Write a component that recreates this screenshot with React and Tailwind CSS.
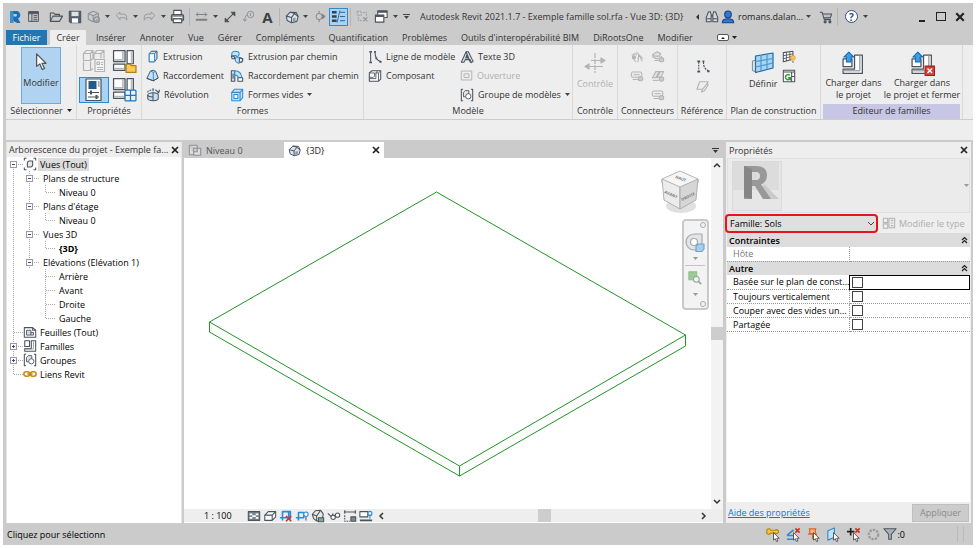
import React from "react";

const INK = "#4b535d";
const BLUE = "#2f8bd0";
const PALE = "#c4e3f8";
const DIM = "#b4b4b4";

function Icon({ size = 16, box = "0 0 16 16", color = INK, children }) {
  return (
    <svg width={size} height={size} viewBox={box} fill="none" stroke={color} strokeWidth="1.2" strokeLinejoin="round" className="block shrink-0" aria-hidden="true">
      {children}
    </svg>
  );
}

function Caret({ color = "#444" }) {
  return (
    <svg width="5" height="3" viewBox="0 0 5 3" className="block shrink-0" aria-hidden="true">
      <path d="M0 0h5L2.5 3z" fill={color} />
    </svg>
  );
}

function Cross({ size = 8, color = "#222", width = 1.7 }) {
  return (
    <svg width={size} height={size} viewBox="0 0 8 8" className="block shrink-0" aria-hidden="true">
      <path d="M1 1l6 6M7 1l-6 6" stroke={color} strokeWidth={width} />
    </svg>
  );
}

/* ---------- quick access icons ---------- */

const RevitLogo = () => (
  <Icon>
    <path d="M3 2h6.500a4 4 0 0 1 1.500 7.600L13.500 14h-3.600L7.500 10H6.300v4H3zM6.300 5v2.400h2.500a1.200 1.200 0 0 0 0-2.400z" fill="#1c6fb5" stroke="none" fillRule="evenodd" />
    <path d="M3 2h3.300v12H3z" fill="#3592d8" stroke="none" />
    <path d="M6.300 10h1.200l2.400 4-3-2z" fill="#0d4f8b" stroke="none" />
  </Icon>
);
const HomePanel = () => (
  <Icon size={13}>
    <rect x="2" y="2" width="12" height="12" />
    <path d="M2 4.500h12M6 4.500V14M8 7h4.500M8 9.500h4.500M8 12h4.500" />
    <path d="M2 3h12" strokeWidth="2" />
  </Icon>
);
const OpenFolder = () => (
  <Icon size={14}>
    <path d="M1.500 13V3.500h4l1.500 1.500h5V7M1.500 13l3-6h11l-3.500 6z" />
  </Icon>
);
const Save = () => (
  <Icon size={14}>
    <path d="M1.500 1.500h13v13H3l-1.500-1.500z" fill="#56616d" />
    <rect x="4" y="2" width="8" height="5" fill="#dfe3e6" stroke="none" />
    <rect x="4.500" y="9.500" width="7" height="5" fill="#fff" stroke="none" />
  </Icon>
);
const Sync = () => (
  <Icon size={14} color="#8d9298">
    <path d="M7 1.500l6 2.500v6l-6 3.500-5.500-3V4z" fill="#c9cccf" />
    <path d="M1.500 4L7 6.500 13 4M7 6.500v7" />
    <circle cx="11" cy="11" r="3.300" fill="#a0a4a8" />
    <path d="M9.500 11.500a1.600 1.600 0 0 1 3-1" stroke="#e4e4e4" strokeWidth="1" />
  </Icon>
);
const Undo = () => (
  <Icon size={13} color="#969ba0">
    <path d="M1.500 6.500L6 2.500v2.500h4.500a4 4 0 0 1 4 4v3.500l-2-3H6v2.500z" />
  </Icon>
);
const Redo = () => (
  <Icon size={13} color="#969ba0">
    <path d="M14.500 6.500L10 2.500v2.500H5.500a4 4 0 0 0-4 4v3.500l2-3H10v2.500z" />
  </Icon>
);
const Printer = () => (
  <Icon size={15}>
    <rect x="4" y="1.500" width="8" height="4.500" fill="#fff" />
    <rect x="1.500" y="6" width="13" height="6.500" rx="1.500" fill="#8d969f" />
    <path d="M3 9h10" stroke="#fff" />
    <rect x="3.500" y="10.500" width="9" height="4" fill="#fff" />
  </Icon>
);
const Dims = () => (
  <Icon size={13} color="#7a8087">
    <path d="M2 5.500h12M4 3L1.500 5.500 4 8M12 3l2.500 2.500L12 8" />
    <path d="M1 12h14" strokeWidth="2.500" />
  </Icon>
);
const Measure = () => (
  <Icon size={14}>
    <path d="M2.500 13.500l11-11" />
    <path d="M9.500 2.500h4v4zM2.500 9.500v4h4z" fill={INK} />
  </Icon>
);
const Tag = () => (
  <Icon size={13} color="#8d9298">
    <circle cx="10.500" cy="5.500" r="4" />
    <path d="M10.500 3.500v4M6.500 6C4 7 3.500 9 3.500 13M1.500 11l2 3 2-3" />
  </Icon>
);
const House = ({ size = 14 }) => (
  <Icon size={size}>
    <path d="M1.500 7L6 2.500l7 .5 2 4.500-1.500 5.500-6 1.500-5-2.500z" fill="#d8e4ee" />
    <path d="M1.500 7l6 1.500L11 4l4 3.500M7.500 8.500v6M6 2.500l5 1.500" />
    <path d="M9 9.500l3-.8v4l-3 .8z" fill="#8b98a5" stroke="none" />
  </Icon>
);
const Section = () => (
  <Icon size={13} color="#80868c">
    <circle cx="7.500" cy="8" r="3.800" />
    <path d="M7.500 1v3M7.500 12v3M11.500 5l3.500 3-3.500 3z" fill="#80868c" />
  </Icon>
);
const ThinLines = () => (
  <Icon size={15} color="#235f94">
    <path d="M1 3.500h5M1 8h5M1 12.500h5" strokeWidth="2.600" stroke="#33414e" />
    <path d="M9.500 3.500H15M9.500 8H15M9.500 12.500H15" strokeWidth="1" />
    <path d="M9.500 1.500l-3 13" strokeWidth=".9" />
  </Icon>
);
const CloseHidden = () => (
  <Icon size={13} color="#959a9f">
    <path d="M1.500 1.500h5v5h-5zM9 3h4v4M3 9v4h4" strokeDasharray="2 1" />
    <path d="M9 9l5 5M14 9l-5 5" strokeWidth="1.600" />
  </Icon>
);
const SwitchWin = () => (
  <Icon size={15}>
    <path d="M4 6V2h10v7h-3" fill="#fff" />
    <path d="M4 3h10" strokeWidth="2" />
    <rect x="1.500" y="6.500" width="9" height="7.500" fill="#fff" />
    <path d="M1.500 7.500h9" strokeWidth="2" />
  </Icon>
);
const Binoculars = () => (
  <Icon size={14}>
    <path d="M2.500 6L4 2h2l1 3v8.500H1.500V8zM13.500 6L12 2h-2L9 5v8.500h5.500V8z" fill="#d3d8dd" />
    <path d="M7 6.500h2" strokeWidth="2" />
    <path d="M1.500 10H7M9 10h5.500" />
  </Icon>
);
const UserIcon = () => (
  <Icon size={14} color="#17408a">
    <circle cx="8" cy="5" r="3.800" fill="#3377cf" />
    <path d="M1.500 14.500c0-3.500 3-4.500 6.500-4.500s6.500 1 6.500 4.500z" fill="#3377cf" />
  </Icon>
);
const Cart = () => (
  <Icon size={14}>
    <path d="M1 2.500h2.500L6 11h7.500M4 4.500h10.500L13 9H5.500" fill="#b9c0c7" />
    <circle cx="7" cy="13.500" r="1.200" fill={INK} />
    <circle cx="12.500" cy="13.500" r="1.200" fill={INK} />
  </Icon>
);

function QButton({ label, active = false, children }) {
  return (
    <button type="button" aria-label={label} className={active ? "flex h-[18px] w-[19px] items-center justify-center border border-[#2f8bd0] bg-[#a9d3f5]" : "flex h-[18px] w-[19px] items-center justify-center"}>
      {children}
    </button>
  );
}
function QCaret({ label }) {
  return (
    <button type="button" aria-label={label} className="flex h-[18px] w-[9px] items-center justify-center">
      <Caret />
    </button>
  );
}
const QSep = () => <span className="mx-[2px] h-[18px] w-px shrink-0 bg-[#b4b4b4]" />;

function TitleBar() {
  return (
    <header className="flex h-[27px] shrink-0 items-center pl-[2px] pr-1">
      <QButton label="Revit"><RevitLogo /></QButton>
      <QButton label="Accueil"><HomePanel /></QButton>
      <div className="flex items-center pl-[3px]">
        <QButton label="Ouvrir"><OpenFolder /></QButton>
        <QButton label="Enregistrer"><Save /></QButton>
        <QButton label="Synchroniser"><Sync /></QButton>
        <QCaret label="Options de synchronisation" />
        <QButton label="Annuler"><Undo /></QButton>
        <QCaret label="Liste des annulations" />
        <QButton label="Rétablir"><Redo /></QButton>
        <QCaret label="Liste des rétablissements" />
        <QButton label="Imprimer"><Printer /></QButton>
        <QSep />
        <QButton label="Mesurer"><Dims /></QButton>
        <QCaret label="Options de mesure" />
        <QButton label="Cote alignée"><Measure /></QButton>
        <QButton label="Étiquette"><Tag /></QButton>
        <QButton label="Texte"><span className="text-[15px] font-bold leading-4 text-[#3b4148]">A</span></QButton>
        <QSep />
        <QButton label="Vue 3D par défaut"><House /></QButton>
        <QCaret label="Options de vue 3D" />
        <QButton label="Coupe"><Section /></QButton>
        <QButton label="Lignes fines" active><ThinLines /></QButton>
        <QSep />
        <QButton label="Fermer les vues cachées"><CloseHidden /></QButton>
        <QButton label="Changer de fenêtre"><SwitchWin /></QButton>
        <QCaret label="Liste des fenêtres" />
        <button type="button" aria-label="Personnaliser" className="flex h-[18px] w-3 flex-col items-center justify-center gap-px">
          <span className="h-px w-[7px] bg-[#444]" />
          <Caret />
        </button>
      </div>
      <h1 className="ml-2 min-w-0 flex-1 truncate text-[#333]">Autodesk Revit 2021.1.7 - Exemple famille sol.rfa - Vue 3D: {"{3D}"}</h1>
      <div className="flex items-center">
        <button type="button" aria-label="Réduire la recherche" className="flex w-[9px] justify-center">
          <svg width="3" height="6" viewBox="0 0 3 6"><path d="M3 0v6L0 3z" fill="#333" /></svg>
        </button>
        <QButton label="Rechercher"><Binoculars /></QButton>
        <button type="button" className="flex items-center gap-[3px] text-[#222]">
          <UserIcon />
          romans.dalan...
          <Caret />
        </button>
        <span className="w-[5px]" />
        <QButton label="Boutique"><Cart /></QButton>
        <QSep />
        <span className="w-[2px]" />
        <QButton label="Aide">
          <span className="flex h-[13px] w-[13px] items-center justify-center rounded-full border border-[#2a4f86] bg-white text-[10px] font-bold leading-none text-[#2a4f86]">?</span>
        </QButton>
        <QCaret label="Options d'aide" />
      </div>
      <div className="ml-[42px] flex items-center">
        <button type="button" aria-label="Réduire" className="flex h-[18px] w-[19px] items-end justify-center pb-1"><span className="h-[2px] w-[6px] bg-[#222]" /></button>
        <button type="button" aria-label="Agrandir" className="flex h-[18px] w-[19px] items-center justify-center"><span className="h-[9px] w-[10px] border border-[#222]" /></button>
        <button type="button" aria-label="Fermer" className="flex h-[18px] w-[19px] items-center justify-center"><Cross size={10} /></button>
      </div>
    </header>
  );
}

const TABS = ["Insérer", "Annoter", "Vue", "Gérer", "Compléments", "Quantification", "Problèmes", "Outils d'interopérabilité BIM", "DiRootsOne", "Modifier"];

function RibbonTabs() {
  return (
    <nav className="flex h-[15px] shrink-0 items-stretch pl-[3px] text-[#333]">
      <button type="button" className="w-[41px] bg-[#2277b3] text-white">Fichier</button>
      <button type="button" className="ml-[3px] w-9 bg-[#eeeeee]">Créer</button>
      <div className="flex items-center gap-[14px] pl-[10px]">
        {TABS.map((t) => (
          <button type="button" key={t} className="whitespace-nowrap">{t}</button>
        ))}
      </div>
      <button type="button" aria-label="Réduire le ruban" className="ml-6 flex items-center gap-[3px]">
        <span className="flex h-[7px] w-3 items-center justify-center rounded-[2px] border border-[#555] bg-white">
          <svg width="4" height="2" viewBox="0 0 4 2"><path d="M0 2L2 0l2 2z" fill="#222" /></svg>
        </span>
        <Caret color="#222" />
      </button>
    </nav>
  );
}

/* ---------- ribbon icons ---------- */

const Arrow = ({ size = 20 }) => (
  <Icon size={size} color="#555">
    <path d="M4.500 1.500v10l2.500-2 2 4.500 1.800-.8-2-4.200h3.200z" fill="#fff" strokeWidth="1" />
  </Icon>
);
const TypeCubes = () => (
  <Icon size={24} box="0 0 24 24" color={DIM}>
    <path d="M1.500 4.500l3-3h6.500v8l-2.500 2h-7zM12 4.500l3-3h7v8M12 4.500v6M1.500 12.500v9h7v-9M8.500 21.500l2.500-2M1.500 4.500h7v7M8.500 4.500l2.500-3M12 4.500h7l3-3M19 4.500v5" />
    <rect x="13" y="10.500" width="9.500" height="12" fill="#f4f4f4" />
    <path d="M15 13h2.500v2.500H15zM19 13.500h2M19 15.500h2M15 18.500h6M15 20.500h6" />
  </Icon>
);
const FamilyBlocks = ({ badge }) => (
  <Icon size={25} box="0 0 24 24">
    <path d="M1.500 1.500h11v10.500h-11z" fill="#fff" />
    <path d="M10.500 2v8.500H2" stroke="#b3bac1" strokeWidth="1.600" />
    <path d="M14.500 1.500h6v12.500h-6z" fill="#fff" />
    <path d="M18.800 2v12" stroke="#b3bac1" strokeWidth="1.600" />
    <path d="M1.500 14.500h11v6h-11z" fill="#fff" />
    <path d="M2 18.800h10" stroke="#b3bac1" strokeWidth="1.600" />
    {badge === "folder" && <path d="M13.500 14.500h4l1 1.500H23v6.500h-9.500z" fill="#f8cb57" stroke="#b07d1a" />}
    {badge === "grid" && (
      <g stroke="#1d76bd">
        <rect x="12.500" y="12.500" width="10.500" height="10.500" rx="1" fill="#e4f3fd" />
        <path d="M17.750 12.500v10.500M12.500 17.750h10.500" />
      </g>
    )}
  </Icon>
);
const PropsSheet = () => (
  <Icon size={24} box="0 0 24 24">
    <rect x="4" y="1" width="15" height="21.500" fill="#fff" />
    <rect x="6.500" y="3" width="8" height="8" fill="#215b8e" stroke="none" />
    <path d="M16 4h1.500M16 6h1.500M16 8h1.500" strokeWidth="1" />
    <path d="M6 14.500h11M6 19h11" />
    <path d="M9 12.500v4M14.500 17v4" strokeWidth="2" />
  </Icon>
);
const Extrusion = () => (
  <Icon size={13}>
    <path d="M4 4.500l2.500-3h7v9l-3 4H4z" fill={PALE} />
    <path d="M10.500 4.500l3-3" />
    <path d="M4 4.500h6.500v10H4z" fill="#f2faff" stroke={BLUE} />
  </Icon>
);
const Blend = () => (
  <Icon size={13}>
    <path d="M5.500 2.500L9 1.500l3 1.500 3 8-6 3.500-8-3z" fill={PALE} />
    <path d="M5.500 2.500L9 4l3-1M9 4v10.500" stroke={BLUE} />
    <path d="M1 11.500l8 3 6-3.500" />
  </Icon>
);
const Revolve = () => (
  <Icon size={14}>
    <path d="M2 5c0-1.800 3-3 6-3s6 1.200 6 3" strokeDasharray="2 1.200" />
    <path d="M2 8c0-1.500 3-2.500 6-2.500S14 6.500 14 8v4c0 1.500-3 2.500-6 2.500S2 13.500 2 12z" fill={PALE} />
    <path d="M2 8c0 1.500 3 2.200 6 2.200V5.500M8 10.200v4.300" />
    <path d="M8 0v4" stroke={BLUE} />
    <path d="M12 3l2.500 2.500L15.500 2" />
  </Icon>
);
const Sweep = () => (
  <Icon size={14}>
    <path d="M2 7V4.500C2 2.500 4 1.500 6 1.500s4.500 1 4.500 3-2 2.500-2 3.500 1 1 2.500.5l3.500 1.500v2.500l-4 2.500c-3 0-4.500-2-4.500-4.500 0-2 1.500-2.500 1.500-3.500S4.500 6 4.500 7z" fill={PALE} stroke={BLUE} />
    <path d="M1.500 7h3l1 3h-3zM11 9l3.500 1-1 4-3-.5z" fill="#fff" />
  </Icon>
);
const SweptBlend = () => (
  <Icon size={14}>
    <path d="M1.500 2h4v12h-4z" fill={PALE} />
    <path d="M5.500 2c4.500 0 7.500 3 8 8h-4c0-1.500-1.500-3-4-3z" fill={PALE} stroke={BLUE} />
    <path d="M9 10h5.500v4H9z" fill="#fff" />
    <path d="M3.500 5v6" />
  </Icon>
);
const VoidForm = () => (
  <Icon size={14}>
    <path d="M2 5l3-3.500h9.500V11l-3 3.500H2z" fill={PALE} stroke={BLUE} />
    <path d="M2 5h9.500v9.500M11.500 5l3-3.500" stroke={BLUE} />
    <rect x="4.500" y="7.500" width="4.500" height="4.500" fill="#fff" stroke={BLUE} />
  </Icon>
);
const ModelLine = () => (
  <Icon size={14}>
    <path d="M3 3v10" />
    <path d="M1.500 2h3M1.500 14h3" strokeWidth="2" />
    <path d="M8 2c0 6 1.500 10 6.500 11" />
    <path d="M7 2h2M13 13.500h2.500M8.500 9.500h2" strokeWidth="2" />
  </Icon>
);
const Component = ({ size = 14, color = INK }) => (
  <Icon size={size} color={color}>
    <path d="M1.500 4.500l3-2.500h10v9.500L12 14H1.500z" fill="#fff" />
    <path d="M1.500 9.500H6l1.500-1.500V4.500h-6M9 4.500v6.500H1.500M12 14V4.500H9L11 2M12 4.500L14.500 2" strokeWidth="1" />
  </Icon>
);
const FamilySmall = () => (
  <Icon size={14}>
    <path d="M2 2h5.500v6.500H2zM9.500 2h5v12H2v-3h7.500z" fill="#fff" />
    <path d="M12 2.500v9H2.500" stroke="#98a1a9" strokeWidth="1" />
  </Icon>
);
const Text3D = () => (
  <Icon size={14}>
    <path d="M1.500 14L7 2h2.500L15 13l-2 1.500L11.500 11H6l-1.500 3z" fill="#dfe3e6" />
    <path d="M6.500 9L8 5.500 9.500 9zM7 2l5 12.500" fill="#fff" />
  </Icon>
);
const Opening = () => (
  <Icon size={13} color={DIM}>
    <rect x="1.500" y="2.500" width="13" height="11" />
    <rect x="5" y="6" width="6" height="4.500" />
  </Icon>
);
const ModelGroup = ({ size = 14 }) => (
  <Icon size={size}>
    <path d="M3.500 1.500h-2v13h2M12.500 1.500h2v13h-2" />
    <path d="M4 5l2-2h4v5l-2 2H4z" fill="#e3e6e8" strokeWidth="1" />
    <circle cx="9.500" cy="9.500" r="3" fill="#fff" strokeWidth="1" />
  </Icon>
);
const Control = () => (
  <Icon size={24} box="0 0 24 24" color={DIM}>
    <path d="M12 2v20" strokeDasharray="5 1" />
    <path d="M2 15.500h18M8 9.500h14" />
    <path d="M2 15.500l4-2.500v5zM22 9.500l-4-2.500v5z" fill={DIM} />
  </Icon>
);
const Elec = () => (
  <Icon size={14} color={DIM}>
    <path d="M7 2l8 8M10 5l-1 9M10 5l4 8M2 6l4-2 2 2" />
    <circle cx="4.500" cy="8.500" r="1.800" fill={DIM} />
    <path d="M4.500 10.500c0 2 1.500 2 2.500 3" />
  </Icon>
);
const Duct = () => (
  <Icon size={14} color={DIM}>
    <path d="M2 5l5-3 4 2-1 3H4zM2 5v3l4 2h6V7" fill="#e2e2e2" />
    <circle cx="12" cy="11" r="2.500" fill="#ccc" />
    <path d="M4 12h5" />
  </Icon>
);
const Pipe = () => (
  <Icon size={14} color={DIM}>
    <path d="M1.500 10l4-7h4l-4 7zM6.500 10l4-7h4l-3 6z" fill="#e2e2e2" />
    <circle cx="12" cy="11.500" r="2.500" fill="#ccc" />
    <path d="M2 13h7" />
  </Icon>
);
const Tray = () => (
  <Icon size={14} color={DIM}>
    <rect x="1.500" y="3.500" width="12" height="6" rx="2" />
    <path d="M4 6.500h7" />
    <circle cx="12" cy="11" r="2.500" fill="#ccc" />
    <path d="M3 12h6" />
  </Icon>
);
const RefLine = () => (
  <Icon size={15}>
    <path d="M4 3v10" strokeDasharray="2 1" />
    <path d="M2.500 2.500h3M2.500 13.500h3" strokeWidth="2" />
    <path d="M9 2.500c0 5 1 8 5 10" strokeDasharray="2.500 1" />
    <path d="M8 2.500h2M13 13h2.500" strokeWidth="2" />
  </Icon>
);
const RefPlane = () => (
  <Icon size={15} color={DIM}>
    <path d="M5 4h9l-3.500 8H2z" />
    <path d="M13 6l-5 6-1 3 3-1.500 4-6z" fill="#eee" />
  </Icon>
);
const WorkPlane = () => (
  <Icon size={24} box="0 0 24 24" color="#1c6ca8">
    <path d="M1.500 10l4-1v12l-4-1.500z" fill="#e6ebef" stroke="#8a939b" />
    <path d="M4.500 5l17.500-3v15L4.500 21.500z" fill="#a8d5f3" />
    <path d="M10 4v16M16 3v15.500M4.500 10.500l17.500-3M4.500 16l17.500-4" stroke="#4b97cd" />
  </Icon>
);
const ShowPlane = () => (
  <Icon size={14}>
    <path d="M1.500 3l11-1.500v9l-11 3z" fill="#fff" />
    <path d="M5 2.500V13M9 2v9.500M1.500 6.500l11-2M1.500 10l11-3" strokeWidth="1" />
    <circle cx="12.500" cy="9" r="2.800" fill="#fbc24d" stroke="#e0a02c" strokeWidth=".8" />
    <path d="M11.500 12.500h2v2h-2z" fill="#999" stroke="none" />
  </Icon>
);
const Viewer = () => (
  <Icon size={14}>
    <rect x="1.500" y="1.500" width="13" height="13" fill="#fff" />
    <path d="M1.500 3.500h13M11 3.500v5h3.500M11 8.500v6" />
    <path d="M9 7c-3-1.500-5 0-5 2.500s3 3.500 5 2l-1.500-1.500H10V13" stroke="#3b9b3b" strokeWidth="1.800" />
  </Icon>
);
const LoadProject = ({ close }) => (
  <Icon size={25} box="0 0 24 24">
    <path d="M2 17.500h11V4h7.500v17.500H2z" fill="#fff" />
    <path d="M18 4.500v14.500H2.500" stroke="#a3abb3" strokeWidth="1.500" />
    <path d="M2 7.500h8.500v7.500H2z" fill="#fff" />
    <path d="M7.500 1l4.800 4.800H9.800v4.700H5.200V5.800H2.700z" fill="#3b9fe8" stroke="#1868ab" strokeWidth="1" />
    {close && (
      <g>
        <rect x="14.500" y="14.500" width="9" height="9" fill="#dd3b35" stroke="#a51d18" strokeWidth="1" />
        <path d="M16.800 16.800l4.400 4.400M21.200 16.800l-4.400 4.400" stroke="#fff" strokeWidth="1.400" />
      </g>
    )}
  </Icon>
);

function Panel({ title, width, accent = false, children }) {
  return (
    <section className={`${width} flex shrink-0 flex-col border-r border-[#d9d9d9] pt-[2px]`}>
      <div className="flex h-[57px]">{children}</div>
      <h2 className={accent ? "mx-[2px] flex-1 bg-[#c7c6e4] text-center" : "flex-1 whitespace-nowrap text-center"}>{title}</h2>
    </section>
  );
}

function Cmd({ icon, disabled = false, menu = false, children }) {
  return (
    <button type="button" disabled={disabled} className={disabled ? "flex h-[19px] items-center gap-1 whitespace-nowrap text-[#b0b0b0]" : "flex h-[19px] items-center gap-1 whitespace-nowrap"}>
      {icon}
      {children}
      {menu && <Caret />}
    </button>
  );
}
function IconCmd({ label, children }) {
  return <button type="button" aria-label={label} className="flex h-[19px] w-5 items-center justify-center">{children}</button>;
}

function Ribbon() {
  return (
    <div className="ml-[3px] flex h-[75px] shrink-0 overflow-hidden border-b border-[#cdcdcd] bg-[#eeeeee] text-[#333]">
      <Panel width="w-[71px]" title={<button type="button" className="inline-flex items-center gap-1">Sélectionner <Caret color="#222" /></button>}>
        <button type="button" className="mx-auto flex w-10 flex-col items-center gap-1 border border-[#6ea9dc] bg-[#b1d3f2] pt-1">
          <Arrow />
          Modifier
        </button>
      </Panel>
      <Panel width="w-[65px]" title="Propriétés">
        <div className="grid w-full grid-cols-2 place-items-center px-[2px]">
          <button type="button" aria-label="Propriétés du type"><TypeCubes /></button>
          <button type="button" aria-label="Catégorie et paramètres de famille"><FamilyBlocks badge="folder" /></button>
          <button type="button" aria-label="Propriétés" className="border border-[#2f8bd0] bg-[#a9d3f5] px-[2px]"><PropsSheet /></button>
          <button type="button" aria-label="Types de familles"><FamilyBlocks badge="grid" /></button>
        </div>
      </Panel>
      <Panel width="w-[222px]" title="Formes">
        <div className="flex w-[84px] flex-col pl-1">
          <Cmd icon={<Extrusion />}>Extrusion</Cmd>
          <Cmd icon={<Blend />}>Raccordement</Cmd>
          <Cmd icon={<Revolve />}>Révolution</Cmd>
        </div>
        <div className="flex flex-col pl-1">
          <Cmd icon={<Sweep />}>Extrusion par chemin</Cmd>
          <Cmd icon={<SweptBlend />}>Raccordement par chemin</Cmd>
          <Cmd icon={<VoidForm />} menu>Formes vides</Cmd>
        </div>
      </Panel>
      <Panel width="w-[209px]" title="Modèle">
        <div className="flex w-[92px] flex-col pl-1">
          <Cmd icon={<ModelLine />}>Ligne de modèle</Cmd>
          <Cmd icon={<Component />}>Composant</Cmd>
        </div>
        <div className="flex flex-col pl-1">
          <Cmd icon={<Text3D />}>Texte 3D</Cmd>
          <Cmd icon={<Opening />} disabled>Ouverture</Cmd>
          <Cmd icon={<ModelGroup />} menu>Groupe de modèles</Cmd>
        </div>
      </Panel>
      <Panel width="w-[45px]" title="Contrôle">
        <button type="button" disabled className="flex w-full flex-col items-center gap-[2px] pt-1 text-[#b0b0b0]"><Control />Contrôle</button>
      </Panel>
      <Panel width="w-[60px]" title="Connecteurs">
        <div className="grid w-full grid-cols-2 place-items-center px-2">
          <IconCmd label="Connecteur électrique"><Elec /></IconCmd>
          <IconCmd label="Connecteur de gaine"><Duct /></IconCmd>
          <IconCmd label="Connecteur de chemin de câbles"><Tray /></IconCmd>
          <IconCmd label="Connecteur de canalisation"><Pipe /></IconCmd>
          <span />
          <IconCmd label="Connecteur de conduit"><Tray /></IconCmd>
        </div>
      </Panel>
      <Panel width="w-[49px]" title="Référence">
        <div className="flex w-full flex-col items-center justify-center">
          <IconCmd label="Ligne de référence"><RefLine /></IconCmd>
          <IconCmd label="Plan de référence"><RefPlane /></IconCmd>
        </div>
      </Panel>
      <Panel width="w-[94px]" title="Plan de construction">
        <button type="button" className="flex flex-col items-center gap-[2px] pl-[22px] pt-1"><WorkPlane />Définir</button>
        <div className="flex flex-col pl-[2px]">
          <IconCmd label="Afficher"><ShowPlane /></IconCmd>
          <IconCmd label="Visionneuse"><Viewer /></IconCmd>
        </div>
      </Panel>
      <Panel width="w-[142px]" title="Editeur de familles" accent>
        <button type="button" className="flex flex-1 flex-col items-center gap-px pl-1 pt-1 leading-[12px]"><LoadProject />Charger dans<br />le projet</button>
        <button type="button" className="flex w-20 flex-col items-center gap-px whitespace-nowrap pt-1 leading-[12px]"><LoadProject close />Charger dans<br />le projet et fermer</button>
      </Panel>
    </div>
  );
}

/* ---------- project browser ---------- */

function Guide({ kind }) {
  const box = kind === "plus" || kind === "minus" || kind === "root";
  return (
    <svg width="16" height="14" viewBox="0 0 16 14" fill="none" className="block shrink-0" aria-hidden="true">
      <g stroke="#a8a8a8" strokeDasharray="1 1">
        {kind !== "none" && kind !== "root" && <path d={kind === "elbow" ? "M6.500 0v8" : "M6.500 0v14"} />}
        {kind === "root" && <path d="M6.500 8v6" />}
        {(box || kind === "tee" || kind === "elbow") && <path d="M7 7.500h9" />}
      </g>
      {box && <rect x="3.500" y="4.500" width="6" height="6" fill="#fff" stroke="#9a9a9a" />}
      {box && <path d="M5 7.500h3" stroke="#2e4fa0" />}
      {kind === "plus" && <path d="M6.500 6v3" stroke="#2e4fa0" />}
    </svg>
  );
}

const ViewsIcon = () => (
  <Icon size={14}>
    <path d="M4 1.500H1.500V4M12 1.500h2.500V4M4 14.500H1.500V12M12 14.500h2.500V12" />
    <path d="M5 6l2-1.500h4V10l-2 1.500H5z" fill="#e8eaec" />
  </Icon>
);
const SheetsIcon = () => (
  <Icon size={14}>
    <path d="M1.500 3h9.500l3.500 3v8h-13z" fill="#fff" />
    <path d="M11 3v3h3.500" />
    <path d="M4 6h5v5.500H4zM9 8.500h3v3H9" strokeWidth="1" fill="#d5dae0" />
  </Icon>
);
const LinkIcon = () => (
  <Icon size={14} color="#c98a12">
    <rect x="1" y="5.500" width="6.500" height="5" rx="2.500" strokeWidth="1.800" />
    <rect x="8.500" y="5.500" width="6.500" height="5" rx="2.500" strokeWidth="1.800" />
    <path d="M5 8h6" strokeWidth="1.800" />
  </Icon>
);

const TREE = [
  { g: ["root"], icon: <ViewsIcon />, label: "Vues (Tout)", level: 1, selected: true },
  { g: ["line", "minus"], label: "Plans de structure", level: 2 },
  { g: ["line", "line", "elbow"], label: "Niveau 0", level: 3 },
  { g: ["line", "minus"], label: "Plans d'étage", level: 2 },
  { g: ["line", "line", "elbow"], label: "Niveau 0", level: 3 },
  { g: ["line", "minus"], label: "Vues 3D", level: 2 },
  { g: ["line", "line", "elbow"], label: "{3D}", level: 3, bold: true },
  { g: ["line", "minus"], label: "Elévations (Elévation 1)", level: 2 },
  { g: ["line", "none", "tee"], label: "Arrière", level: 3 },
  { g: ["line", "none", "tee"], label: "Avant", level: 3 },
  { g: ["line", "none", "tee"], label: "Droite", level: 3 },
  { g: ["line", "none", "elbow"], label: "Gauche", level: 3 },
  { g: ["tee"], icon: <SheetsIcon />, label: "Feuilles (Tout)", level: 1 },
  { g: ["plus"], icon: <FamilySmall />, label: "Familles", level: 1 },
  { g: ["plus"], icon: <ModelGroup />, label: "Groupes", level: 1 },
  { g: ["elbow"], icon: <LinkIcon />, label: "Liens Revit", level: 1 },
];

function Browser() {
  return (
    <aside className="flex w-[176px] shrink-0 flex-col border-x border-[#e4e4e4] bg-white">
      <div className="flex h-[15px] items-center justify-between bg-[#eeeeee] px-[2px] text-[#333]">
        <h2>Arborescence du projet - Exemple fa...</h2>
        <button type="button" aria-label="Fermer l'arborescence"><Cross /></button>
      </div>
      <ul role="tree" aria-label="Arborescence du projet" className="text-black">
        {TREE.map((n, i) => (
          <li key={i} role="treeitem" aria-level={n.level} aria-selected={!!n.selected} className="flex h-[14px] items-center">
            {n.g.map((k, j) => <Guide key={j} kind={k} />)}
            {n.icon}
            <span className={n.selected ? "ml-px bg-[#dcdcdc] px-[2px]" : n.bold ? "pl-1 font-bold" : n.icon ? "pl-[3px]" : "pl-1"}>{n.label}</span>
          </li>
        ))}
      </ul>
    </aside>
  );
}

/* ---------- drawing area ---------- */

const PlanIcon = () => (
  <Icon size={14} color="#8b9096">
    <path d="M1.500 2.500h9v3M1.500 2.500v11h5M6.500 6h8v8h-8zM6.500 10h4V6" fill="#dcdcdc" />
  </Icon>
);

function ViewCube() {
  return (
    <svg width="44" height="48" viewBox="0 0 44 48" className="absolute right-[9px] top-[10px]" aria-label="ViewCube">
      <ellipse cx="23" cy="38" rx="15" ry="7" fill="#e0e0e0" />
      <path d="M4 11L22 3l18 8v4l-18 8L4 15z" fill="#f6f6f6" stroke="#a2a2a2" strokeWidth=".8" />
      <path d="M4 11l18 8v22L6 32z" fill="#ececec" stroke="#a2a2a2" strokeWidth=".8" />
      <path d="M40 11l-18 8v22l16-9z" fill="#d6d6d6" stroke="#a2a2a2" strokeWidth=".8" />
      <g fill="#777" fontFamily="Open Sans, sans-serif" fontSize="4" fontWeight="bold">
        <text transform="translate(17 10) rotate(20)">HAUT</text>
        <text transform="translate(6 25) rotate(24)">AVANT</text>
        <text transform="translate(24 33) rotate(-25)">DROITE</text>
      </g>
    </svg>
  );
}

function NavBar() {
  return (
    <div className="absolute right-[2px] top-[61px] flex h-[91px] w-[27px] flex-col items-center justify-between rounded border-2 border-[#c9c9c9] bg-[#f3f3f3] py-px pr-px">
      <button type="button" aria-label="Fermer la barre de navigation" className="h-[6px] w-[6px] self-end rounded-full border border-[#aaa]" />
      <button type="button" aria-label="Disque de navigation" className="flex flex-col items-center gap-1">
        <Icon size={20} box="0 0 20 20" color="#a5a9ad">
          <path d="M9 1a8 8 0 1 0 8 8V1z" fill="#e2e4e6" />
          <circle cx="9" cy="9" r="3.500" fill="#fff" />
          <path d="M11 13l2-2h6v5l-2 2.500h-6z" fill="#a9cdec" stroke="#6ea3cf" />
        </Icon>
        <Caret color="#999" />
      </button>
      <span className="h-px w-5 bg-[#c4c4c4]" />
      <button type="button" aria-label="Zoom" className="flex flex-col items-center gap-2">
        <Icon size={14} color="#9aa0a5">
          <rect x="1" y="1" width="9" height="9" fill="#9ccb95" stroke="#8fbd88" />
          <circle cx="9.500" cy="9.500" r="3.300" fill="#f4f4f4" />
          <path d="M12 12l3 3" strokeWidth="2" />
        </Icon>
        <Caret color="#999" />
      </button>
      <button type="button" aria-label="Options de la barre" className="h-[6px] w-[6px] self-end rounded-full border border-[#aaa]" />
    </div>
  );
}

function Chevron({ dir }) {
  const d = { up: "M1 5l3-3 3 3", down: "M1 3l3 3 3-3", left: "M5 1L2 4l3 3", right: "M3 1l3 3-3 3" }[dir];
  return <svg width="8" height="8" viewBox="0 0 8 8" fill="none" stroke="#333" strokeWidth="1.500" className="block"><path d={d} /></svg>;
}

const VIEW_CONTROLS = [
  ["Niveau de détail", <Icon size={14}><rect x="1.500" y="3" width="13" height="10" fill="#7d8791" /><path d="M3 5h3v2H3zM10 5h3v2h-3zM6 7h4v2H6zM3 9h3v2H3zM10 9h3v2h-3z" fill="#fff" stroke="none" /></Icon>],
  ["Style visuel", <Icon size={14}><path d="M2 7l4-4h8.500v6l-4 4H2zM2 7h8.500v6M10.500 7l4-4" fill="#fff" /></Icon>],
  ["Cadrer la vue", <Icon size={14}><path d="M4 13V3h9v9M1 10h10V2" stroke={BLUE} strokeWidth="1.800" /><path d="M8 8l6 6M14 8l-6 6" stroke="#d3302a" strokeWidth="1.800" /></Icon>],
  ["Zone cadrée", <Icon size={14}><path d="M4 13V4h6M1 10h9V4" stroke={BLUE} strokeWidth="1.800" /><circle cx="12.500" cy="6" r="2.500" fill="#fff" stroke={BLUE} /><path d="M12.500 9v4" /></Icon>],
  ["Vue verrouillée", <Icon size={14}><path d="M1.500 6L5 2l6-.5 3 4-1 6-6 2.500-4-3z" fill="#e6e9ec" /><path d="M1.500 6l5 2L11 1.500M6.500 8v5.500" /><rect x="8.500" y="10" width="6" height="4.500" fill="#7bb08b" /></Icon>],
  ["Masquer temporairement", <Icon size={14}><path d="M1 5l4 4 2-4" /><circle cx="7" cy="9.500" r="2.500" fill="#fff" /><circle cx="12" cy="7" r="2.500" fill="#fff" /></Icon>],
  ["Afficher les contraintes", <Icon size={14}><path d="M1 3.500h14M2 1.500v4M14 1.500v4" /><path d="M2 7v7h6" strokeDasharray="2 1" /><rect x="9" y="9" width="5.500" height="5" fill="#808890" /></Icon>],
  ["Visibilité de l'aperçu", <Icon size={14}><path d="M1 3h9v6H1z" fill="#fff" /><path d="M1 13h14" strokeWidth="2" /><circle cx="12.500" cy="5" r="2.300" fill="#e6f4fd" stroke={BLUE} /><path d="M12.500 8v3" stroke={BLUE} /></Icon>],
];

function DrawingArea() {
  return (
    <main className="ml-[2px] flex min-w-0 flex-1 flex-col bg-white">
      <div className="flex h-4 shrink-0 items-center justify-between bg-[#cbcbcb]">
        <div className="flex h-full">
          <button type="button" className="flex w-[100px] items-center gap-1 pl-1 text-[#555]"><PlanIcon />Niveau 0</button>
          <div className="flex w-[100px] items-center justify-between bg-white px-1 text-[#222]">
            <button type="button" className="flex items-center gap-[5px]"><House size={13} />{"{3D}"}</button>
            <button type="button" aria-label="Fermer la vue"><Cross /></button>
          </div>
        </div>
        <button type="button" aria-label="Liste des vues" className="flex flex-col items-center gap-px pr-1">
          <span className="h-px w-[7px] bg-[#333]" />
          <Caret color="#333" />
        </button>
      </div>
      <div className="flex min-h-0 flex-1">
        <div className="relative min-w-0 flex-1">
          <svg viewBox="0 0 526 351" className="block h-full w-full" fill="none" stroke="#1f9424" aria-label="Modèle 3D du sol">
            <path d="M252 34L25 164L275 308L501 177ZM25 164V174L275 318L501 188V177M275 308V318" />
          </svg>
          <ViewCube />
          <NavBar />
        </div>
        <div className="flex w-3 flex-col items-center justify-between bg-[#f3f3f3] py-1">
          <Chevron dir="up" />
          <span className="h-[13px] w-full bg-[#cdcdcd]" />
          <Chevron dir="down" />
        </div>
      </div>
      <div className="mb-px flex h-[13px] shrink-0 items-center bg-[#eeeeee] pl-5 text-black">
        <button type="button" className="w-[42px] text-left">1 : 100</button>
        {VIEW_CONTROLS.map(([label, icon]) => (
          <button type="button" key={label} aria-label={label} className="flex w-4 justify-center">{icon}</button>
        ))}
        <span className="flex w-4 justify-center"><Chevron dir="left" /></span>
        <div className="flex h-full flex-1 justify-center"><span className="h-full w-[13px] bg-[#cdcdcd]" /></div>
        <Chevron dir="right" />
        <span className="w-4" />
      </div>
    </main>
  );
}

/* ---------- properties ---------- */

function GroupRow({ children }) {
  return (
    <tr className="h-[14px] bg-[#dcdcdc]">
      <th colSpan={2} scope="colgroup" className="p-0 px-[2px] text-left font-semibold">
        <div className="flex items-center justify-between">
          {children}
          <svg width="7" height="8" viewBox="0 0 7 8" fill="none" stroke="#222" strokeWidth="1.200"><path d="M1 4l2.500-2.500L6 4M1 7l2.500-2.500L6 7" /></svg>
        </div>
      </th>
    </tr>
  );
}

const CHECKS = ["Basée sur le plan de const...", "Toujours verticalement", "Couper avec des vides un...", "Partagée"];

function Properties() {
  return (
    <aside className="ml-[3px] mr-[2px] flex w-[245px] shrink-0 flex-col bg-[#eeeeee]">
      <div className="flex h-4 shrink-0 items-center justify-between px-[3px] text-[#333]">
        <h2>Propriétés</h2>
        <button type="button" aria-label="Fermer les propriétés"><Cross /></button>
      </div>
      <button type="button" aria-label="Sélecteur de type" className="mx-px flex h-[55px] shrink-0 items-center justify-between border border-[#e0e0e0] bg-[#ebebeb] pl-1">
        <span className="flex h-[50px] w-[50px] items-center justify-center border border-[#dadada] bg-[#e6e6e6]">
          <Icon size={48} box="0 0 48 48">
            <path d="M0 0h46v28H0z" fill="#dcdcdc" stroke="none" />
            <path d="M22 26l15 11h9L32 23z" fill="#cacaca" stroke="none" />
            <path d="M11 4h12c7 0 11 3 11 9 0 5-2 8-6 9.500L38 37h-8l-8-13h-3v13h-8zM19 10v8h4c3 0 4-2 4-4s-1-4-4-4z" fill="#999" stroke="none" fillRule="evenodd" />
            <path d="M11 4l8 3v30l-8-2z" fill="#868686" stroke="none" />
          </Icon>
        </span>
        <Caret color="#999" />
      </button>
      <div className="flex h-5 shrink-0 items-center gap-1">
        <div className="relative -ml-px h-[19px] w-[153px] rounded border-2 border-[#e4161c] bg-[#dfdfdf]">
          <select aria-label="Famille" className="block h-full w-full appearance-none bg-transparent px-[3px] leading-[13px] text-black outline-none">
            <option>Famille: Sols</option>
          </select>
          <svg width="8" height="5" viewBox="0 0 8 5" fill="none" stroke="#444" className="pointer-events-none absolute right-px top-[5px]"><path d="M1 1l3 3 3-3" /></svg>
        </div>
        <button type="button" disabled className="flex items-center gap-[3px] whitespace-nowrap text-[#adadad]">
          <Icon size={14} color={DIM}>
            <path d="M1.500 2.500h5v5h-5zM1.500 9h5v5h-5zM8 2.500h6.500v11H8zM10 5h3M10 8h3M10 11h3" />
          </Icon>
          Modifier le type
        </button>
      </div>
      <div className="mx-px min-h-0 flex-1 bg-white">
        <table className="w-full table-fixed border-collapse text-left text-black">
          <colgroup><col className="w-[122px]" /><col /></colgroup>
          <tbody>
            <GroupRow>Contraintes</GroupRow>
            <tr className="h-[14px]">
              <th scope="row" className="border-b border-r border-dotted border-[#999] p-0 pl-[6px] font-normal text-[#777]">Hôte</th>
              <td className="border-b border-dotted border-[#999] p-0" />
            </tr>
            <GroupRow>Autre</GroupRow>
            {CHECKS.map((c, i) => (
              <tr key={c} className="h-[14px]">
                <th scope="row" className="whitespace-nowrap border-b border-r border-dotted border-[#999] p-0 pl-[6px] font-normal"><label htmlFor={`p${i}`}>{c}</label></th>
                <td className={i === 0 ? "border border-black p-0 pl-[2px]" : "border-b border-dotted border-[#999] p-0 pl-[2px]"}>
                  <input id={`p${i}`} type="checkbox" className="block h-[11px] w-[11px] appearance-none border border-[#444] bg-white checked:bg-[#444]" />
                </td>
              </tr>
            ))}
          </tbody>
        </table>
      </div>
      <div className="flex h-[21px] shrink-0 items-center justify-between px-[2px]">
        <a href="#aide" className="text-[#1473d2] underline">Aide des propriétés</a>
        <button type="button" disabled className="h-[18px] w-[57px] border border-[#bfbfbf] bg-[#cccccc] text-[#8a8a8a]">Appliquer</button>
      </div>
    </aside>
  );
}

/* ---------- status bar ---------- */

const Pointer = () => <path d="M8 6v8l2-1.500 1.200 3 1.500-.6-1.200-2.900H14z" fill="#fff" stroke="#444" strokeWidth=".9" />;
const RedX = () => <path d="M10 1.500l4.500 4.500M14.500 1.500L10 6" stroke="#d3302a" strokeWidth="1.800" />;

const STATUS = [
  ["Sélectionner les liens", <Icon size={15}><path d="M1 4.500a2 2 0 0 1 4-1h5a2 2 0 1 1 0 3H5a2 2 0 0 1-4-2z" fill="#f3c344" stroke="#b8860b" /><Pointer /></Icon>],
  ["Sélectionner les éléments sous-jacents", <Icon size={15}><path d="M1 9l7-6M1 9h7M1 13h7" stroke={BLUE} strokeWidth="1.600" /><RedX /><Pointer /></Icon>],
  ["Sélectionner les éléments verrouillés", <Icon size={15}><path d="M3 2h8M4 2v5h6V2M2 7.500h10M7 8v5" fill="#f6b48c" stroke="#d8662a" strokeWidth="1.300" /><Pointer /></Icon>],
  ["Sélectionner par face", <Icon size={15}><path d="M2 4l7-3v10l-7 3z" fill={PALE} stroke={BLUE} /><Pointer /></Icon>],
  ["Glisser les éléments", <Icon size={15}><path d="M1 5h8M5 1v8" stroke="#222" strokeWidth="1.800" /><RedX /><Pointer /></Icon>],
  ["Processus en arrière-plan", <Icon size={15} color="#9b9b9b"><circle cx="8" cy="8" r="5" strokeWidth="2.500" strokeDasharray="2.500 1.200" /></Icon>],
];

function StatusBar() {
  return (
    <footer className="flex h-[22px] shrink-0 items-center pl-1 text-black">
      <p className="flex-1">Cliquez pour sélectionn</p>
      <div className="flex items-center">
        {STATUS.map(([label, icon]) => (
          <button type="button" key={label} aria-label={label} className="flex w-5 justify-center">{icon}</button>
        ))}
        <button type="button" className="flex items-center">
          <Icon size={14}><path d="M1 2h14L9.500 8.500V14h-3V8.500z" fill="#a9b2bb" /></Icon>
          :0
        </button>
      </div>
      <span className="ml-[52px] h-4 w-px bg-[#bababa]" />
      <span className="ml-[5px] mr-[9px] h-4 w-px bg-[#bababa]" />
    </footer>
  );
}

export default function App() {
  return (
    <div className="flex h-screen flex-col bg-white p-[3px] font-['Open_Sans','Noto_Sans',sans-serif] text-[9px] leading-[13px]">
      <div className="flex min-h-0 flex-1 flex-col bg-[#cbcbcb]">
        <TitleBar />
        <RibbonTabs />
        <Ribbon />
        <div className="ml-[3px] h-5 shrink-0 bg-[#eeeeee]" />
        <div className="flex min-h-0 flex-1 pl-[3px] pt-[2px]">
          <Browser />
          <DrawingArea />
          <Properties />
        </div>
        <StatusBar />
      </div>
    </div>
  );
}
